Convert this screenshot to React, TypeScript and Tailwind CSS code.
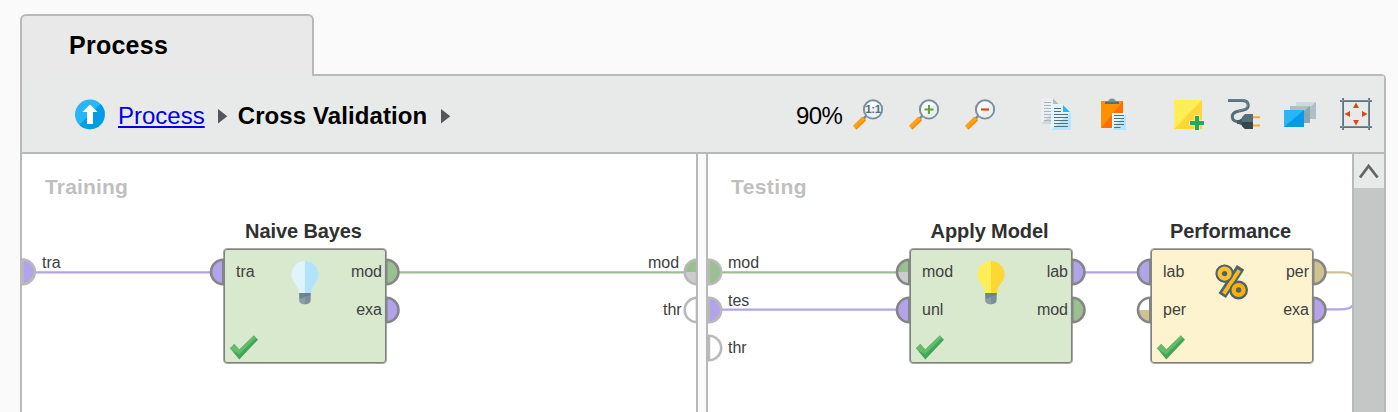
import type { ReactNode } from "react";

type Fill = "violet" | "green" | "khaki" | "white" | "gray";

const COLORS: Record<Fill, string> = {
  violet: "#b3a3ea",
  green: "#99c18f",
  khaki: "#cdc391",
  white: "#ffffff",
  gray: "#cccccc",
};

const FRAME = "#b9b9b9";
const NODE = "#858585";

function Icon({ children }: { children: ReactNode }) {
  return (
    <svg width="32" height="32" viewBox="0 0 32 32" className="block shrink-0">
      {children}
    </svg>
  );
}

function Magnifier({ children }: { children: ReactNode }) {
  return (
    <Icon>
      <path d="M15.6 16.6L11 21.2" stroke="#78909c" strokeWidth="2.6" />
      <path d="M2.6 29.6L12 20.4" stroke="#ffa21a" strokeWidth="5" />
      <path d="M4 31L13.6 21.6" stroke="#fb8c00" strokeWidth="1.6" />
      <circle cx="21" cy="11.4" r="9.1" fill="#f7f9fa" stroke="#78909c" strokeWidth="2" />
      <path d="M27 5.4A8.5 8.5 0 0 1 15 17.4Z" fill="#eceff1" />
      {children}
    </Icon>
  );
}

function CopyIcon() {
  return (
    <Icon>
      <path d="M1 .3H13L18 6V26H1Z" fill="#eceff1" />
      <path d="M1 26L11 16V26Z" fill="#cfd8dc" />
      <path d="M13 .3L18.5 6H13Z" fill="#b0bec5" />
      <path d="M4 4.5H11M4 7.5H11M4 10.5H11M4 13.5H11M4 16.5H11M4 19.5H11M4 22.5H11" stroke="#a9b6c0" />
      <path d="M11 6H23L31 14V32H11Z" fill="#e1f5fe" />
      <path d="M31 14V32H11Z" fill="#b3e5fc" />
      <path d="M23 7L30 14H23Z" fill="#29b6f6" />
      <path d="M14 10.5H21M14 13.5H21M14 16.5H28M14 19.5H28M14 22.5H28M14 25.5H28M14 28.5H28" stroke="#546e7a" />
    </Icon>
  );
}

function PasteIcon() {
  return (
    <Icon>
      <path d="M5 3H27V30H5Z" fill="#ff9100" />
      <path d="M27 3V30H5Z" fill="#ff6d00" />
      <path d="M9 6V3H12L14 .8H18L20 3H23V6Z" fill="#78909c" />
      <path d="M9 4H23V6H9Z" fill="#546e7a" />
      <path d="M16 15H30V32H16Z" fill="#e1f5fe" />
      <path d="M30 16V32H16Z" fill="#b3e5fc" />
      <path d="M18 17.5H28M18 20.5H28M18 23.5H28M18 26.5H28M18 29.5H24.5" stroke="#546e7a" />
    </Icon>
  );
}

function NoteIcon() {
  return (
    <Icon>
      <path d="M2 2H30V31H2Z" fill="#ffee58" />
      <path d="M30 2V31H2Z" fill="#fdd835" />
      <path d="M22.5 17.3H27.5V22.5H32.6V27.5H27.5V32.6H22.5V27.5H17.3V22.5H22.5Z" fill="#f3f6ee" />
      <path d="M23 18H27V23H32V27H27V32H23V27H18V23H23Z" fill="#21ab5b" />
    </Icon>
  );
}

function PlugIcon() {
  return (
    <Icon>
      <path d="M0 2.5H14C21.5 2.5 22.5 10.5 15.5 12L10 13.2C2 15 2.5 23.5 11 23.7" fill="none" stroke="#546e7a" strokeWidth="3" />
      <path d="M0 2H14C20.7 2 21.7 10 15.3 11.5L10 12.7" fill="none" stroke="#78909c" strokeWidth=".9" />
      <path d="M9 22H11L15 19.5V28L11 26H9Z" fill="#455a64" />
      <path d="M17 16H25V31H17L14 28V19Z" fill="#546e7a" />
      <path d="M14 24H25V31H17L14 28Z" fill="#37474f" />
      <path d="M25 19.3H32M25 27.6H32" stroke="#ffa726" strokeWidth="2" />
    </Icon>
  );
}

function LayersIcon() {
  return (
    <Icon>
      <path d="M12 4H32V21H12Z" fill="#cfd8dc" />
      <path d="M32 4V21H12Z" fill="#b0bec5" />
      <path d="M6 8H26V25H6Z" fill="#b0bec5" />
      <path d="M26 8V25H6Z" fill="#90a4ae" />
      <path d="M0 12H20V29H0Z" fill="#29b6f6" />
      <path d="M20 12V29H0Z" fill="#039be5" />
    </Icon>
  );
}

function FitIcon() {
  return (
    <Icon>
      <path d="M3 0V32M29 0V32M0 3H32M0 29H32" stroke="#546e7a" strokeWidth="2" />
      <path d="M2.7 0V32M28.7 0V32M0 2.7H32M0 28.7H32" stroke="#90a4ae" strokeWidth=".7" />
      <path d="M16 4.5L19 10H13ZM16 27.5L19 22H13ZM4.5 16L10 13V19ZM27.5 16L22 13V19Z" fill="#dd4519" />
    </Icon>
  );
}

function Crumb() {
  return (
    <svg width="10" height="17" viewBox="0 0 10 17" className="block shrink-0">
      <path d="M0 1L9.3 8.3L0 15.6Z" fill="#55555c" />
    </svg>
  );
}

/** Half-round connector; `side` is the direction in which the bow points. */
function Port({ x, y, side, top, bottom, stroke }: { x: number; y: number; side: "l" | "r"; top: Fill; bottom?: Fill; stroke: string }) {
  const s = side === "l" ? -1 : 1;
  const sweep = side === "l" ? 0 : 1;
  return (
    <g>
      <path d={`M${x} ${y - 12.3}A12.3 12.3 0 0 ${sweep} ${x} ${y + 12.3}Z`} fill={COLORS[top]} />
      {bottom && <path d={`M${x} ${y}H${x + s * 12.3}A12.3 12.3 0 0 ${sweep} ${x} ${y + 12.3}Z`} fill={COLORS[bottom]} />}
      <path d={`M${x} ${y - 12.3}A12.3 12.3 0 0 ${sweep} ${x} ${y + 12.3}Z`} fill="none" stroke={stroke} strokeWidth="2.6" />
    </g>
  );
}

function Wire({ d, color }: { d: string; color: Fill }) {
  return <path d={d} fill="none" stroke={COLORS[color]} strokeWidth="2.2" />;
}

function Bulb({ light, dark }: { light: string; dark: string }) {
  return (
    <svg width="28" height="44" viewBox="0 0 28 44" className="block">
      <path d="M14 0A13.6 13.6 0 0 0 .4 13.6C.4 21.5 7.8 24 7.8 32H14Z" fill={light} />
      <path d="M14 0A13.6 13.6 0 0 1 27.6 13.6C27.6 21.5 20.2 24 20.2 32H14Z" fill={dark} />
      <path d="M8.3 32H19.7V38.5Q19.7 43.3 14 43.3Q8.3 43.3 8.3 38.5Z" fill="#78909c" />
      <path d="M8.3 32H14V43.3Q8.3 43.3 8.3 38.5Z" fill="#8b9ea8" />
      <path d="M8.3 32H19.7V33.5L9 38Z" fill="#607d8b" opacity=".7" />
    </svg>
  );
}

function Percent() {
  return (
    <svg width="34" height="38" viewBox="0 0 34 38" className="block">
      <g fill="none" stroke="#4a6570">
        <circle cx="9.6" cy="9.6" r="4.6" strokeWidth="9.2" />
        <circle cx="23.6" cy="26" r="4.7" strokeWidth="9.4" />
        <path d="M25.6 3.4L7.2 31.6" strokeWidth="8.8" />
      </g>
      <path d="M24.2 6.2L8.8 29.6" stroke="#ffb718" strokeWidth="3.9" />
      <circle cx="9.6" cy="9.6" r="8" fill="none" stroke="#4a6570" strokeWidth="1.6" />
      <circle cx="23.6" cy="26" r="8" fill="none" stroke="#4a6570" strokeWidth="1.6" />
      <g fill="none" strokeWidth="4.4">
        <circle cx="9.6" cy="9.6" r="4.9" stroke="#ffc02c" />
        <circle cx="23.6" cy="26" r="4.9" stroke="#ffb000" />
      </g>
    </svg>
  );
}

function Check() {
  return (
    <svg width="30" height="26" viewBox="0 0 30 26" className="block">
      <path d="M1 13.2L5.2 9L10.3 14.5L24.8 .5L29 4.7L10.3 24.5Z" fill="#43a55a" />
      <path d="M1 13.2L5.2 9L10.3 14.5L24.8 .5L27 2.7L10.3 19.3L3.3 15.5Z" fill="#66bb6a" />
    </svg>
  );
}

interface NodeProps {
  x: number;
  y: number;
  title: string;
  tint: "green" | "cream";
  inputs: string[];
  outputs: string[];
  icon: ReactNode;
}

function OperatorNode({ x, y, title, tint, inputs, outputs, icon }: NodeProps) {
  return (
    <div className="absolute flex w-[164px] flex-col" style={{ left: x, top: y }}>
      <div className="h-[29px] pr-[3px] text-center text-[20px] leading-[24px] font-bold tracking-[-0.1px] whitespace-nowrap text-[#303030]">
        {title}
      </div>
      <div
        className={`relative flex h-[116px] justify-between rounded-[4px] border border-[#a8a8a6] pl-[12px] text-[16px] leading-[20px] text-[#404040] shadow-[inset_0_0_0_1px_#808080] ${
          tint === "green" ? "bg-[#d9e9ce]" : "bg-[#fdf4cf]"
        }`}
      >
        <div className="flex flex-col gap-[18px] pt-[13px]">
          {inputs.map((label) => (
            <span key={label}>{label}</span>
          ))}
        </div>
        <div className="flex flex-col gap-[18px] pt-[13px] pr-[4px] text-right">
          {outputs.map((label) => (
            <span key={label}>{label}</span>
          ))}
        </div>
        <div className="absolute top-[12px] left-[67px]">{icon}</div>
        <div className="absolute top-[86px] left-[5px]">
          <Check />
        </div>
      </div>
    </div>
  );
}

function PortLabel({ x, y, children }: { x: number; y: number; children: ReactNode }) {
  return (
    <span className="absolute text-[16px] leading-[20px] text-[#404040]" style={{ left: x, top: y }}>
      {children}
    </span>
  );
}

function TrainingPane() {
  return (
    <section className="relative w-[674px] shrink-0 overflow-hidden bg-white">
      <h2 className="pt-[21px] pl-[23px] text-[21px] leading-[24px] font-bold tracking-[0.15px] text-[#bfbfbf]">Training</h2>
      <OperatorNode x={201} y={65} title="Naive Bayes" tint="green" inputs={["tra"]} outputs={["mod", "exa"]} icon={<Bulb light="#e1f3fb" dark="#b3e3fb" />} />
      <svg width="674" height="258" viewBox="22 154 674 258" className="absolute top-0 left-0">
        <Wire d="M34 272.4H212" color="violet" />
        <Wire d="M399 272.4H685" color="green" />
        <Port x={22.5} y={271.8} side="r" top="violet" stroke={FRAME} />
        <Port x={223.3} y={272} side="l" top="violet" stroke={NODE} />
        <Port x={386.2} y={272} side="r" top="green" stroke={NODE} />
        <Port x={386.2} y={310} side="r" top="violet" stroke={NODE} />
        <Port x={697} y={272} side="l" top="green" bottom="gray" stroke={FRAME} />
        <Port x={697} y={310} side="l" top="white" stroke={FRAME} />
      </svg>
      <PortLabel x={20} y={99}>tra</PortLabel>
      <PortLabel x={626} y={99}>mod</PortLabel>
      <PortLabel x={641} y={146}>thr</PortLabel>
    </section>
  );
}

function TestingPane() {
  return (
    <section className="relative min-w-0 flex-1 overflow-hidden bg-white">
      <h2 className="pt-[21px] pl-[23px] text-[21px] leading-[24px] font-bold tracking-[0.4px] text-[#bfbfbf]">Testing</h2>
      <OperatorNode x={201} y={65} title="Apply Model" tint="green" inputs={["mod", "unl"]} outputs={["lab", "mod"]} icon={<Bulb light="#ffee58" dark="#fdd835" />} />
      <OperatorNode x={442} y={65} title="Performance" tint="cream" inputs={["lab", "per"]} outputs={["per", "exa"]} icon={<div className="-ml-[3px] pt-[3px]"><Percent /></div>} />
      <svg width="644" height="258" viewBox="708 154 644 258" className="absolute top-0 left-0">
        <Wire d="M720 272.4H898" color="green" />
        <Wire d="M720 309.6H898" color="violet" />
        <Wire d="M1085 272.4H1140" color="violet" />
        <Wire d="M1326 272.4H1342Q1351.5 272.4 1352.5 277" color="khaki" />
        <Wire d="M1326 309.3H1340Q1351.5 309 1352.5 305" color="violet" />
        <Port x={708.9} y={272} side="r" top="green" stroke={FRAME} />
        <Port x={708.9} y={310} side="r" top="violet" stroke={FRAME} />
        <Port x={708.9} y={348} side="r" top="white" stroke={FRAME} />
        <Port x={909.3} y={272} side="l" top="green" bottom="gray" stroke={NODE} />
        <Port x={909.3} y={310} side="l" top="violet" stroke={NODE} />
        <Port x={1072.2} y={272} side="r" top="violet" stroke={NODE} />
        <Port x={1072.2} y={310} side="r" top="green" stroke={NODE} />
        <Port x={1150.3} y={272} side="l" top="violet" stroke={NODE} />
        <Port x={1150.3} y={310} side="l" top="white" bottom="khaki" stroke={NODE} />
        <Port x={1313.2} y={272} side="r" top="khaki" stroke={NODE} />
        <Port x={1313.2} y={310} side="r" top="violet" stroke={NODE} />
      </svg>
      <PortLabel x={20} y={99}>mod</PortLabel>
      <PortLabel x={20} y={137}>tes</PortLabel>
      <PortLabel x={20} y={184}>thr</PortLabel>
    </section>
  );
}

function Toolbar() {
  return (
    <div className="flex h-[78px] shrink-0 items-start border-b-2 border-[#b9b9b9] bg-[#e8eae9] pl-[53px] text-[24px] leading-[28px] text-black">
      <div className="flex w-[721px] items-start pt-[23px]">
        <svg width="30" height="31" viewBox="0 0 30 31" className="block">
          <circle cx="15" cy="15.5" r="15" fill="#29b6f6" />
          <path d="M25.6 4.9A15 15 0 0 1 4.4 26.1Z" fill="#039be5" />
          <path d="M15 5.5L22.6 13H18V25H12V13H7.4Z" fill="#fff" />
        </svg>
        <a className="mt-[3px] ml-[13px] text-[#0000ee] underline decoration-2 underline-offset-[2px]">Process</a>
        <div className="mt-[9px] ml-[13px]">
          <Crumb />
        </div>
        <span className="mt-[3px] ml-[10px] font-bold tracking-[0.1px] whitespace-nowrap">Cross Validation</span>
        <div className="mt-[9px] ml-[14px]">
          <Crumb />
        </div>
      </div>
      <span className="w-[56px] pt-[26px] tracking-[-0.6px]">90%</span>
      <div className="flex gap-[44px] pt-[22px]">
        <div className="flex gap-[24px]">
          <Magnifier>
            <text x="21" y="15.4" textAnchor="middle" fontSize="11.5" fontWeight="bold" letterSpacing="-.4" fill="#546e7a">1:1</text>
          </Magnifier>
          <Magnifier>
            <path d="M21 7V16M16.5 11.5H25.5" stroke="#689f38" strokeWidth="2" />
          </Magnifier>
          <Magnifier>
            <path d="M17 11.5H25" stroke="#dd4519" strokeWidth="2.2" />
          </Magnifier>
        </div>
        <div className="flex gap-[24px]">
          <CopyIcon />
          <PasteIcon />
        </div>
        <div className="flex gap-[24px]">
          <NoteIcon />
          <PlugIcon />
          <LayersIcon />
          <FitIcon />
        </div>
      </div>
    </div>
  );
}

export default function App() {
  return (
    <div className="flex h-[412px] w-[1398px] flex-col overflow-hidden bg-[#fafafa] pt-[14px] pl-[20px] font-['Liberation_Sans',Arial,sans-serif]">
      <div className="z-10 -mb-[2px] flex h-[62px] w-[294px] shrink-0 items-start rounded-t-[6px] border-2 border-b-0 border-[#b9b9b9] bg-[#e9e9e9] pt-[15px] pl-[47px] text-[25px] leading-[28px] font-bold tracking-[0.25px] text-black">
        Process
      </div>
      <div className="flex h-[338px] w-[1366px] flex-col rounded-tr-[5px] border-x-2 border-t-2 border-[#b9b9b9]">
        <Toolbar />
        <div className="flex min-h-0 flex-1">
          <TrainingPane />
          <div className="w-[12px] shrink-0 border-x-2 border-[#b9b9b9] bg-[#fafafa]" />
          <TestingPane />
          <div className="flex w-[32px] shrink-0 flex-col border-l-2 border-[#b9b9b9] bg-[#c5c7c6]">
            <div className="flex h-[34px] items-center justify-center bg-[#e8eae9]">
              <svg width="22" height="18" viewBox="0 0 22 18" className="block">
                <path d="M2 15.5L10.6 4L19.6 15.5" fill="none" stroke="#646464" strokeWidth="2.8" />
              </svg>
            </div>
          </div>
        </div>
      </div>
    </div>
  );
}
